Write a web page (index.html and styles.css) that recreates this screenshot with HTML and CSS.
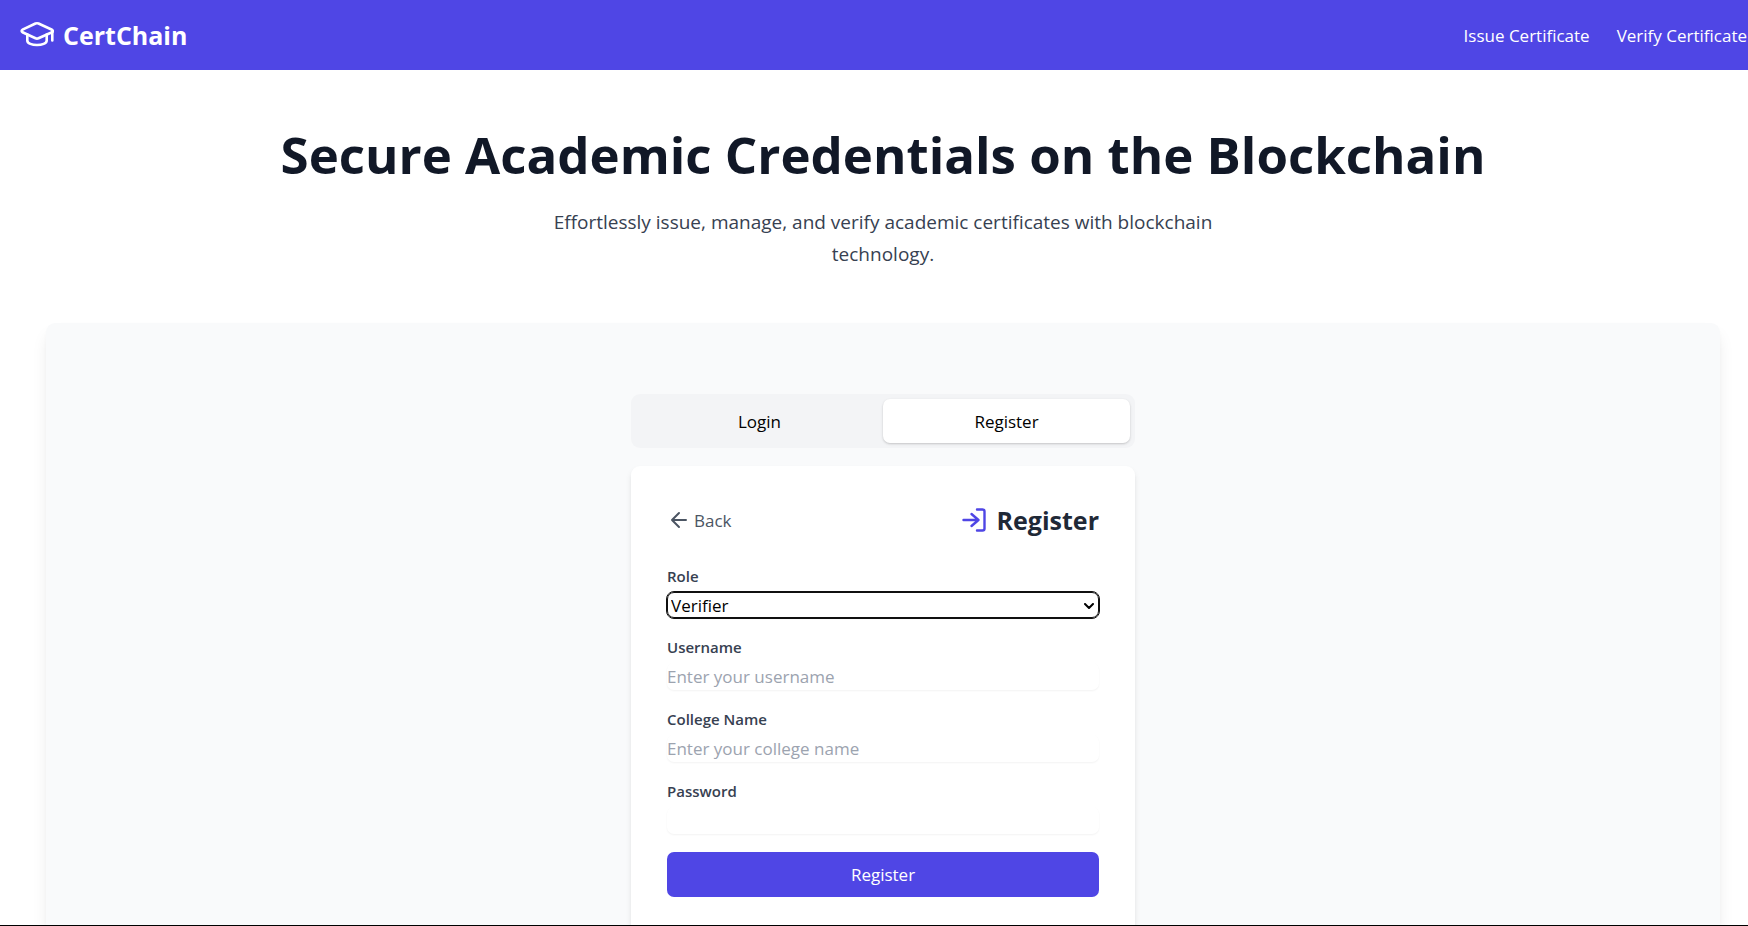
FILE: index.html
```html
<!DOCTYPE html>
<html lang="en">
<head>
<meta charset="utf-8">
<title>CertChain</title>
<link rel="stylesheet" href="styles.css">
</head>
<body>
<header class="topbar">
  <a class="brand" href="#">
    <svg class="brand-icon" viewBox="0 0 36 36" aria-hidden="true">
      <path d="M17.500 6.500Q19 5.900 20.500 6.500L34 12.700Q35.800 14 34 15.200L20.500 21.300Q19 22 17.500 21.300L4.500 15.200Q2.800 14 4.500 12.700Z"/>
      <path d="M9.300 17.500V23.500C9.300 29.500 28.700 29.500 28.700 23.500V17.500M34.300 14.500V23.500"/>
    </svg>
    <span>CertChain</span>
  </a>
  <nav class="nav">
    <a href="#">Issue Certificate</a>
    <a href="#">Verify Certificate</a>
  </nav>
</header>
<main class="page">
  <section class="hero">
    <h1>Secure Academic Credentials on the Blockchain</h1>
    <p>Effortlessly issue, manage, and verify academic certificates with blockchain technology.</p>
  </section>
  <section class="panel">
    <div class="auth">
      <div class="tabs">
        <button type="button" class="tab">Login</button>
        <button type="button" class="tab tab-active">Register</button>
      </div>
      <form class="card">
        <div class="card-head">
          <button type="button" class="back">
            <svg class="back-icon" viewBox="0 0 18 18" aria-hidden="true"><path d="M16 9H2M9 2L2 9l7 7"/></svg>
            <span>Back</span>
          </button>
          <h2 class="title">
            <svg class="title-icon" viewBox="0 0 24 24" aria-hidden="true"><path d="M1.500 12H16.500M9.500 6l7 6-7 6M15 1.500h5.500a2 2 0 0 1 2 2v17a2 2 0 0 1-2 2H15"/></svg>
            <span>Register</span>
          </h2>
        </div>
        <div class="field">
          <label for="role">Role</label>
          <div class="select-wrap">
            <select id="role" class="control select"><option>Verifier</option></select>
            <svg class="chevron" viewBox="0 0 10 6" aria-hidden="true"><path d="M1 1l4 4 4-4"/></svg>
          </div>
        </div>
        <div class="field">
          <label for="username">Username</label>
          <input id="username" class="control" type="text" placeholder="Enter your username">
        </div>
        <div class="field">
          <label for="college">College Name</label>
          <input id="college" class="control" type="text" placeholder="Enter your college name">
        </div>
        <div class="field">
          <label for="password">Password</label>
          <input id="password" class="control" type="password">
        </div>
        <button type="button" class="submit">Register</button>
      </form>
    </div>
  </section>
</main>
</body>
</html>
```
FILE: styles.css
```css
* { box-sizing: border-box; }
body {
  margin: 0;
  height: 100vh;
  display: flex;
  flex-direction: column;
  overflow: hidden;
  border-bottom: 1px solid #000;
  background: #fff;
  color: #000;
  font: 17px/27px "Open Sans", "Noto Sans", sans-serif;
}
button, input, select { font: inherit; color: inherit; border: 0; margin: 0; padding: 0; background: none; }
a { color: inherit; text-decoration: none; }
svg { fill: none; stroke: currentColor; stroke-width: 2; stroke-linecap: round; stroke-linejoin: round; }

.topbar {
  flex: none;
  display: flex;
  align-items: center;
  justify-content: space-between;
  height: 70px;
  padding: 0 1px 0 18px;
  background: #4f46e5;
  color: #fff;
}
.brand { display: flex; align-items: center; gap: 9px; font-size: 25px; line-height: 36px; font-weight: 700; }
.brand-icon { width: 36px; height: 36px; stroke-width: 2.600; }
.nav { display: flex; gap: 27px; }

.page {
  flex: 1;
  min-height: 0;
  display: flex;
  flex-direction: column;
  padding: 54px 28px 0 46px;
}
.hero { flex: none; text-align: center; }
.hero h1 { margin: 0; font-size: 51px; line-height: 60px; font-weight: 700; color: #111827; }
.hero p { max-width: 756px; margin: 22px auto 53px; font-size: 19px; line-height: 32px; color: #374151; }

.panel {
  flex: 1;
  min-height: 0;
  padding: 71px 0 0;
  border-radius: 9px 9px 0 0;
  background: #f9fafb;
  box-shadow: 0 11px 17px -3px rgba(0, 0, 0, .1), 0 4px 7px -4px rgba(0, 0, 0, .1);
}
.auth { max-width: 504px; margin: 0 auto; }
.tabs { display: flex; padding: 5px; margin-bottom: 18px; border-radius: 9px; background: #f3f4f6; }
.tab { flex: 1; height: 44px; border-radius: 7px; }
.tab-active { background: #fff; box-shadow: 0 1px 3px rgba(0, 0, 0, .1), 0 1px 2px rgba(0, 0, 0, .1); }

.card {
  padding: 36px;
  border-radius: 9px;
  background: #fff;
  box-shadow: 0 4px 7px -1px rgba(0, 0, 0, .1), 0 2px 4px -2px rgba(0, 0, 0, .1);
}
.card-head { display: flex; align-items: center; justify-content: space-between; margin-bottom: 27px; }
.back { display: flex; align-items: center; gap: 6px; padding-left: 3px; color: #4b5563; }
.back-icon { width: 18px; height: 18px; }
.title { display: flex; align-items: center; gap: 11px; margin: 0; font-size: 25px; line-height: 36px; font-weight: 700; color: #1f2937; }
.title-icon { width: 24px; height: 24px; stroke-width: 2.400; color: #4f46e5; }

.field { margin-bottom: 18px; }
.field label { display: block; margin-bottom: 4px; font-size: 15px; line-height: 23px; font-weight: 600; color: #374151; }
.control {
  display: block;
  width: 100%;
  height: 27px;
  border-radius: 7px;
  background: #fff;
  box-shadow: 0 1px 2px rgba(0, 0, 0, .05);
}
.control::placeholder { color: #9ca3af; opacity: 1; }
.select-wrap { position: relative; }
.select { height: 26px; padding: 0 3px; line-height: 23px; border: 1px solid #101010; outline: 1px solid #101010; appearance: none; }
.chevron { position: absolute; right: 5px; top: 11px; width: 10px; height: 6px; pointer-events: none; }
.submit { display: block; width: 100%; height: 45px; border-radius: 7px; background: #4f46e5; color: #fff; }
```
